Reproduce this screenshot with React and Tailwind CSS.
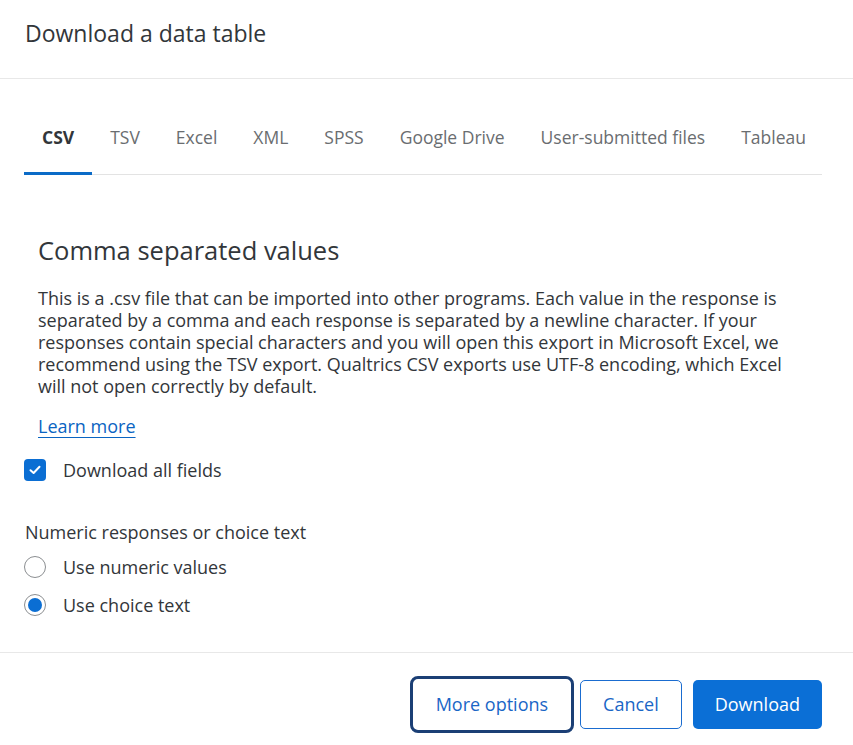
import React, { useState } from 'react'

const tabs = ['CSV', 'TSV', 'Excel', 'XML', 'SPSS', 'Google Drive', 'User-submitted files', 'Tableau']

function Radio({ checked, label, onClick }) {
  return (
    <label className="flex items-center gap-[17px] cursor-pointer" onClick={onClick}>
      <span className="w-[22px] h-[22px] rounded-full border border-[#8b8e91] flex items-center justify-center bg-white">
        {checked && <span className="w-[14px] h-[14px] rounded-full bg-[#0b6ed3]" />}
      </span>
      <span className="text-[18px] leading-[22px] text-[#32363a]">{label}</span>
    </label>
  )
}

export default function App() {
  const [active, setActive] = useState('CSV')
  const [allFields, setAllFields] = useState(true)
  const [choice, setChoice] = useState('text')

  return (
    <div className="w-[853px] h-[745px] overflow-hidden bg-white flex flex-col text-[#32363a]" style={{ fontFamily: '"Open Sans", "Noto Sans", sans-serif' }}>
      {/* шапка */}
      <div className="h-[79px] border-b border-[#e8e8e8] px-[25px] pt-[18px]">
        <h1 className="text-[23px] leading-[30px] font-normal">Download a data table</h1>
      </div>

      {/* вкладки */}
      <div className="pl-[24px] pr-[31px] mt-[46px]">
        <div className="flex border-b border-[#e3e3e3]">
          {tabs.map(t => (
            <button
              key={t}
              onClick={() => setActive(t)}
              className={`shrink-0 whitespace-nowrap px-[18px] pb-[23px] text-[17.5px] leading-[24px] border-b-[3px] -mb-[1px] ${
                active === t ? 'border-[#0b6bc7] font-bold text-[#32363a]' : 'border-transparent text-[#6a6d70]'
              }`}
            >
              {t}
            </button>
          ))}
        </div>
      </div>

      {/* содержимое */}
      <div className="px-[24px] flex-1">
        <div className="pl-[14px] pr-[24px]">
          <h2 className="mt-[59px] text-[25.5px] leading-[32px] font-normal">Comma separated values</h2>
          <p className="mt-[21px] text-[18px] leading-[22px]">
            This is a .csv file that can be imported into other programs. Each value in the response is separated by a comma and each response is separated by a newline character. If your responses contain special characters and you will open this export in Microsoft Excel, we recommend using the TSV export. Qualtrics CSV exports use UTF-8 encoding, which Excel will not open correctly by default.
          </p>
          <a href="#" className="inline-block mt-[18px] text-[18px] leading-[22px] text-[#0a64c2] underline underline-offset-[4px]">Learn more</a>
        </div>

        <label className="mt-[20px] flex items-center gap-[17px] cursor-pointer" onClick={() => setAllFields(v => !v)}>
          <span className={`w-[22px] h-[22px] rounded-[4px] flex items-center justify-center ${allFields ? 'bg-[#0b6ed3]' : 'border border-[#8b8e91]'}`}>
            {allFields && (
              <svg width="12" height="10" viewBox="0 0 12 10" fill="none">
                <path d="M1.5 5.2 L4.6 8 L10.5 1.8" stroke="white" strokeWidth="2" strokeLinecap="round" strokeLinejoin="round" />
              </svg>
            )}
          </span>
          <span className="text-[18px] leading-[22px]">Download all fields</span>
        </label>

        <div className="mt-[40px] pl-[1px] text-[18px] leading-[22px]">Numeric responses or choice text</div>
        <div className="mt-[13px] flex flex-col gap-[16px]">
          <Radio checked={choice === 'num'} label="Use numeric values" onClick={() => setChoice('num')} />
          <Radio checked={choice === 'text'} label="Use choice text" onClick={() => setChoice('text')} />
        </div>
      </div>

      {/* подвал */}
      <div className="h-[93px] border-t border-[#e8e8e8] px-[31px] pt-[23px] flex justify-end items-start">
        <button className="h-[57px] px-[23px] rounded-[8px] border-[3px] border-[#1b3f75] text-[18px] text-[#1a66c6] mr-[6px]">More options</button>
        <button className="mt-[4px] h-[49px] px-[22px] rounded-[5px] border border-[#1a6cd0] text-[18px] text-[#1a66c6] mr-[11px]">Cancel</button>
        <button className="mt-[4px] h-[49px] px-[22px] rounded-[5px] bg-[#0b6fd6] text-[18px] text-white">Download</button>
      </div>
    </div>
  )
}
